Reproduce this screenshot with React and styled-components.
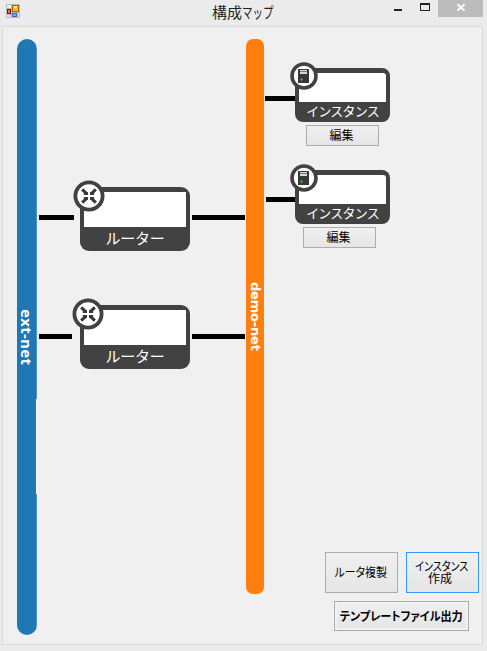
import React from "react";
import styled, { createGlobalStyle } from "styled-components";

const GlobalStyle = createGlobalStyle`
  * { box-sizing: border-box; }
  body { margin: 0; background: #ebebeb; overflow: hidden; }
  button { padding: 0; margin: 0; }
`;

const jp = `"Noto Sans CJK JP", "Noto Sans", sans-serif`;

const Window = styled.div`
  width: 487px;
  height: 651px;
  display: flex;
  flex-direction: column;
  background: #ebebeb;
  font-family: ${jp};
  color: #000;
`;

const TitleBar = styled.header`
  height: 26px;
  flex: none;
  display: grid;
  grid-template-columns: 120px 1fr 99px 4px;
  align-items: start;
`;

const AppIcon = styled.svg`
  display: block;
  margin: 4px 0 0 6px;
`;

const Title = styled.h1`
  margin: 0 0 0 92px;
  font-size: 15px;
  line-height: 23px;
  font-weight: 400;
  color: #222;
  white-space: nowrap;
  display: flex;
`;

const Condensed = styled.span`
  display: inline-block;
  transform: scaleX(${(p) => p.$scale});
  transform-origin: ${(p) => p.$origin || "center"};
`;

const Controls = styled.div`
  display: flex;
  justify-content: flex-end;
`;

const ControlButton = styled.button`
  width: ${(p) => p.$width}px;
  height: 17px;
  border: 0;
  background: ${(p) => (p.$close ? "#bcbcbc" : "transparent")};
  svg { display: block; }
`;

const Client = styled.main`
  flex: none;
  width: 481px;
  height: 619px;
  margin-left: 2px;
  border: 1px solid #dadada;
  background: #f0f0f0;
  padding: 12px 3px 0 14px;
  display: flex;
  align-items: flex-start;
`;

const Network = styled.div`
  flex: none;
  width: ${(p) => p.$width}px;
  height: ${(p) => p.$height}px;
  border-radius: ${(p) => p.$radius}px;
  background: ${(p) => p.$color};
  color: #fff;
  display: flex;
  justify-content: center;
  padding-top: ${(p) => p.$labelTop}px;
  ${(p) =>
    p.$notch &&
    `background: linear-gradient(${p.$color}, ${p.$color}) 0 0 / 19px 100% no-repeat,
      linear-gradient(#4d93c3 360px, #f7f7f7 360px, #f7f7f7 455px, #4d93c3 455px);`}
`;

const NetworkLabel = styled.span`
  writing-mode: vertical-rl;
  white-space: nowrap;
  font: bold ${(p) => p.$size}px/18px ${(p) => p.$font};
  letter-spacing: ${(p) => p.$spacing}px;
`;

const RouterColumn = styled.section`
  flex: none;
  width: 209px;
  padding-top: 148px;
  display: flex;
  flex-direction: column;
  gap: 54px;
`;

const SideColumn = styled.section`
  flex: none;
  width: 215px;
  height: 592px;
  padding-top: 29px;
  display: flex;
  flex-direction: column;
`;

const Connection = styled.div`
  display: flex;
  align-items: flex-start;
  padding-left: ${(p) => p.$inset}px;
`;

const Link = styled.div`
  flex: none;
  width: ${(p) => p.$width}px;
  height: 5px;
  margin: ${(p) => p.$top}px ${(p) => p.$after || 0}px 0 ${(p) => p.$before || 0}px;
  background: #000;
`;

const Device = styled.article`
  position: relative;
  flex: none;
  width: ${(p) => (p.$small ? 95 : 110)}px;
  height: ${(p) => (p.$small ? 54 : 64)}px;
  border-radius: ${(p) => (p.$small ? 8 : 9)}px;
  background: #424242;
  padding: 5px 4px 0;
  display: flex;
  flex-direction: column;
`;

const Screen = styled.div`
  flex: none;
  height: ${(p) => (p.$small ? 29 : 35)}px;
  border-radius: 0 ${(p) => (p.$small ? 3 : 0)}px 0 0;
  background: #fff;
`;

const DeviceName = styled.div`
  color: #fff;
  text-align: center;
  white-space: nowrap;
  font-size: ${(p) => (p.$small ? 13 : 15)}px;
  letter-spacing: ${(p) => (p.$small ? -0.8 : -0.2)}px;
  line-height: ${(p) => (p.$small ? 18 : 21)}px;
`;

const Badge = styled.svg`
  position: absolute;
  left: ${(p) => p.$left}px;
  top: ${(p) => p.$top}px;
`;

const FormButton = styled.button`
  flex: none;
  width: ${(p) => p.$width}px;
  height: ${(p) => p.$height}px;
  border: 1px solid ${(p) => (p.$focused ? "#3399ff" : "#acacac")};
  background: linear-gradient(#f0f0f0, #e5e5e5);
  color: #000;
  font-family: ${jp};
  font-size: 12px;
  font-weight: ${(p) => (p.$bold ? 700 : 400)};
  font-feature-settings: "palt";
  line-height: 12px;
  white-space: nowrap;
  display: flex;
  flex-direction: column;
  align-items: center;
  justify-content: center;
  padding: 0 ${(p) => p.$shift || 0}px ${(p) => p.$lift || 0}px 0;
  box-shadow: ${(p) => (p.$bold ? "inset 0 0 0 2px #f2f2f2" : "none")};
`;

const SecondLine = styled.span`
  margin-right: 3px;
`;

const EditRow = styled.div`
  padding: 3px 0 ${(p) => p.$below}px ${(p) => p.$left}px;
  display: flex;
`;

const Actions = styled.div`
  margin-top: auto;
  display: flex;
  flex-direction: column;
  gap: 8px;
`;

const ActionRow = styled.div`
  display: flex;
  gap: 8px;
  padding-left: ${(p) => p.$left}px;
`;

function FormIcon() {
  return (
    <AppIcon width="14" height="14" viewBox="0 0 14 14" shapeRendering="crispEdges">
      <path fill="#b9b9b9" d="M0 0h14v14H0z" />
      <path fill="#eeeeee" d="M1 1h4v3H1zM1 11h2v2H1zM4 11h1v2H4zM12 9h1v4h-1z" />
      <path fill="#9b6b08" d="M6 1h7v7H6z" />
      <path fill="#f3bd22" d="M7 2h5v5H7z" />
      <path fill="#ffe37c" d="M8 2h3v2H8z" />
      <path fill="#8d1010" d="M1 5h4v5H1z" />
      <path fill="#d87870" d="M2 6h2v3H2z" />
      <path fill="#3768c4" d="M6 9h5v4H6z" />
      <path fill="#7daef5" d="M7 10h3v2H7z" />
    </AppIcon>
  );
}

function Router({ badgeLeft, linkWidth, gap, linkTop }) {
  return (
    <Connection $inset={2}>
      <Link $width={linkWidth} $top={linkTop} $after={gap} />
      <Device>
        <Badge $left={badgeLeft} $top={-7} width="32" height="32" viewBox="0 0 32 32">
          <circle cx="16" cy="16" r="13.6" fill="#fff" stroke="#424242" strokeWidth="3.8" />
          <path
            d="M9.2 9.4l4.6 4.4M22.8 9.4l-4.6 4.4M9.2 22.6l4.6-4.4M22.8 22.6l-4.6-4.4"
            stroke="#383838"
            strokeWidth="3.1"
          />
          <path
            fill="#383838"
            d="M15 12v3h-4.2v-1.4zM17 12v3h4.2v-1.4zM15 20v-3h-4.2v1.4zM17 20v-3h4.2v1.4z"
          />
        </Badge>
        <Screen />
        <DeviceName>ルーター</DeviceName>
      </Device>
      <Link $width={53} $top={linkTop} $before={2} />
    </Connection>
  );
}

function Instance({ start, linkWidth, linkTop }) {
  return (
    <Connection $inset={start}>
      <Link $width={linkWidth} $top={linkTop} />
      <Device $small>
        <Badge $left={-5} $top={-6} width="28" height="28" viewBox="0 0 28 28">
          <circle cx="14" cy="14" r="12" fill="#fff" stroke="#424242" strokeWidth="3.6" />
          <g shapeRendering="crispEdges">
            <path fill="#383838" d="M8 7h11v14H8z" />
            <path fill="#d8d8d8" d="M10 8h7v4h-7z" />
            <path fill="#777777" d="M10 9h7v1h-7z" />
            <path fill="#36ad36" d="M11 16h1v1h1v1h-1v1h-1v-1h-1v-1h1z" />
          </g>
        </Badge>
        <Screen $small />
        <DeviceName $small>インスタンス</DeviceName>
      </Device>
    </Connection>
  );
}

export default function App() {
  return (
    <>
      <GlobalStyle />
      <Window>
        <TitleBar>
          <FormIcon />
          <Title>
            構成<Condensed $scale={0.7} $origin="left">マップ</Condensed>
          </Title>
          <Controls>
            <ControlButton $width={27} aria-label="Minimize">
              <svg width="27" height="17"><path d="M10 9h8v2h-8z" fill="#222" /></svg>
            </ControlButton>
            <ControlButton $width={27} aria-label="Maximize">
              <svg width="27" height="17" shapeRendering="crispEdges">
                <path d="M9 3h10v8H9zM10 5v5h8V5z" fill="#222" fillRule="evenodd" />
              </svg>
            </ControlButton>
            <ControlButton $width={45} $close aria-label="Close">
              <svg width="45" height="17">
                <path d="M19.5 4.2l7 6.4M26.5 4.2l-7 6.4" stroke="#fff" strokeWidth="1.9" />
              </svg>
            </ControlButton>
          </Controls>
        </TitleBar>
        <Client>
          <Network $width={20} $height={596} $radius={10} $color="#1f77b4" $labelTop={270} $notch>
            <NetworkLabel $size={15} $spacing={0.3} $font={`"Open Sans", sans-serif`}>
              ext-net
            </NetworkLabel>
          </Network>
          <RouterColumn>
            <Router linkWidth={35} gap={6} badgeLeft={-7} linkTop={28} />
            <Router linkWidth={33} gap={8} badgeLeft={-8} linkTop={29} />
          </RouterColumn>
          <Network $width={18} $height={555} $radius={7} $color="#ff7f0e" $labelTop={243}>
            <NetworkLabel $size={13} $spacing={-0.2} $font={`"DejaVu Sans", sans-serif`}>
              demo-net
            </NetworkLabel>
          </Network>
          <SideColumn>
            <Instance start={1} linkWidth={30} linkTop={28} />
            <EditRow $left={42} $below={24}>
              <FormButton $width={73} $height={21} $lift={2} $shift={2}>編集</FormButton>
            </EditRow>
            <Instance start={2} linkWidth={29} linkTop={27} />
            <EditRow $left={39} $below={0}>
              <FormButton $width={73} $height={21} $lift={2} $shift={2}>編集</FormButton>
            </EditRow>
            <Actions>
              <ActionRow $left={61}>
                <FormButton $width={73} $height={41} $lift={2} $shift={2}>
                  <Condensed $scale={0.91}>ルータ複製</Condensed>
                </FormButton>
                <FormButton $width={73} $height={41} $focused $lift={2} $shift={2}>
                  <Condensed $scale={0.84}>インスタンス</Condensed>
                  <SecondLine>作成</SecondLine>
                </FormButton>
              </ActionRow>
              <ActionRow $left={70}>
                <FormButton $width={135} $height={30} $bold>
                  <Condensed $scale={0.93}>テンプレートファイル出力</Condensed>
                </FormButton>
              </ActionRow>
            </Actions>
          </SideColumn>
        </Client>
      </Window>
    </>
  );
}
